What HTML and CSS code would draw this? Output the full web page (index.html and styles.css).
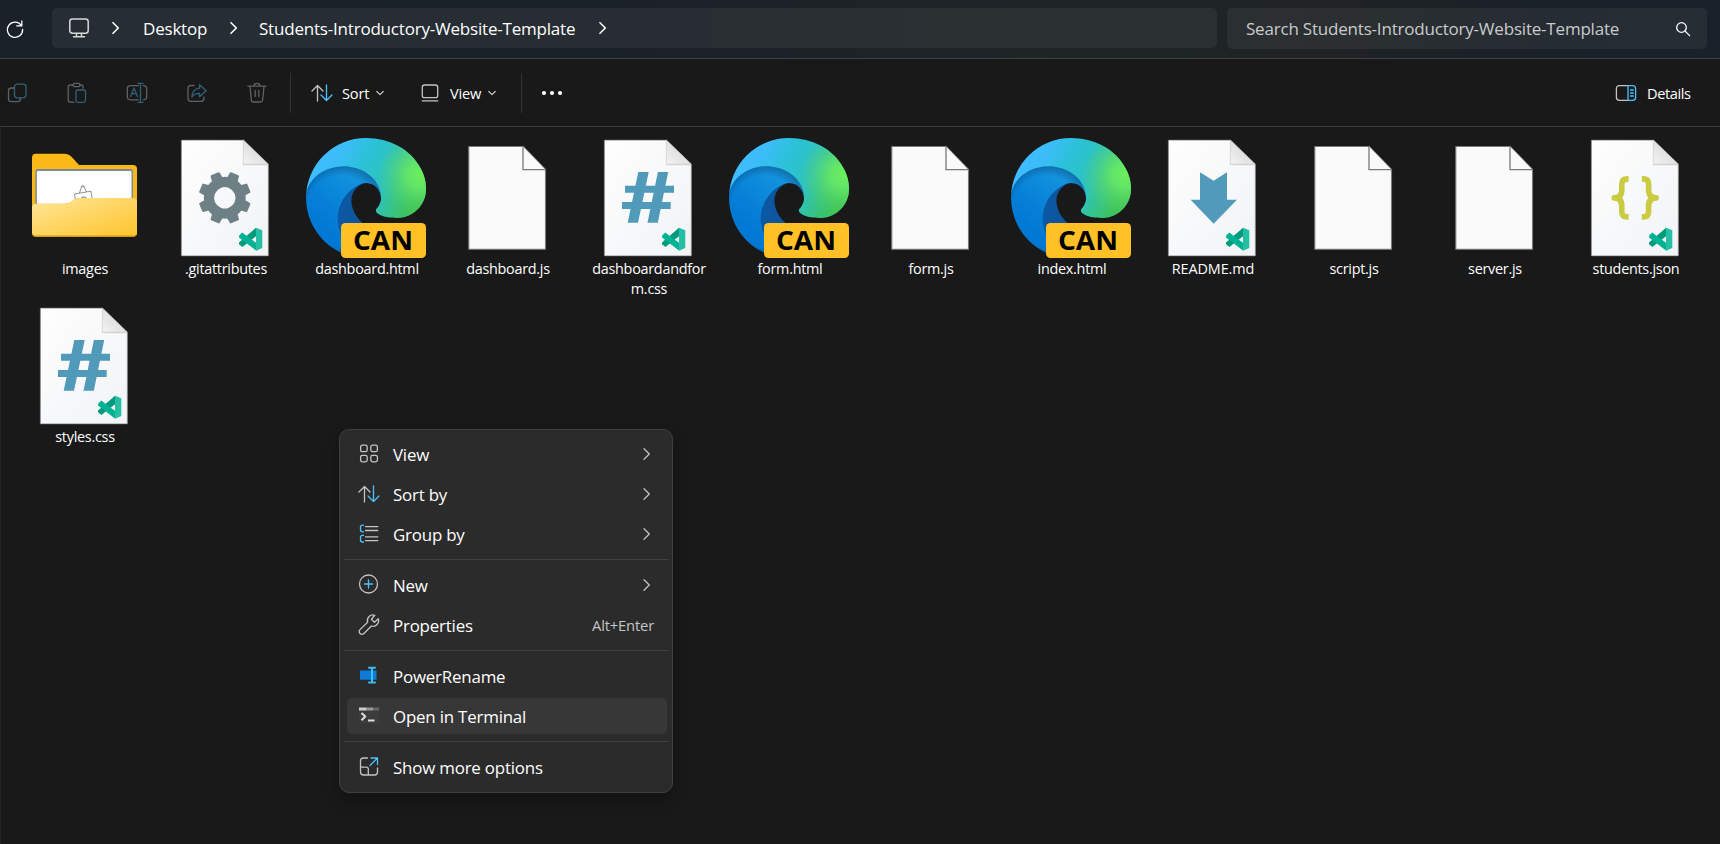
FILE: index.html
```html
<!DOCTYPE html>
<html lang="en">
<head>
<meta charset="utf-8">
<title>Students-Introductory-Website-Template</title>
<link rel="stylesheet" href="styles.css">
</head>
<body>
<svg class="defs" width="0" height="0" aria-hidden="true">
  <defs>
    <linearGradient id="paperFill" x1="0" y1="0" x2="1" y2="1"><stop offset="0" stop-color="#fefefe"/><stop offset="1" stop-color="#f1f3f5"/></linearGradient>
    <linearGradient id="foldFill" x1="0" y1="1" x2="1" y2="0"><stop offset="0" stop-color="#f3f3f3"/><stop offset="1" stop-color="#cfcfd1"/></linearGradient>
    <linearGradient id="folderFront" x1="0" y1="0" x2="1" y2="1"><stop offset="0" stop-color="#ffe699"/><stop offset="1" stop-color="#fec52d"/></linearGradient>
    <linearGradient id="edgeDark" gradientUnits="userSpaceOnUse" x1="63" y1="177" x2="242" y2="177"><stop offset="0" stop-color="#0c59a4"/><stop offset="1" stop-color="#114a8b"/></linearGradient>
    <linearGradient id="edgeBlue" gradientUnits="userSpaceOnUse" x1="153" y1="75" x2="46" y2="214"><stop offset="0" stop-color="#1b9de2"/><stop offset=".16" stop-color="#1595df"/><stop offset=".67" stop-color="#0680d7"/><stop offset="1" stop-color="#0078d4"/></linearGradient>
    <radialGradient id="edgeShade" gradientUnits="userSpaceOnUse" cx="75" cy="156" r="101"><stop offset=".74" stop-color="#062a50" stop-opacity="0"/><stop offset="1" stop-color="#062a50" stop-opacity=".42"/></radialGradient>
    <linearGradient id="edgeTop" gradientUnits="userSpaceOnUse" x1="20" y1="60" x2="215" y2="165"><stop offset="0" stop-color="#3fbcff"/><stop offset=".16" stop-color="#3bbdf8"/><stop offset=".4" stop-color="#2ac2d6"/><stop offset=".68" stop-color="#2fc3bb"/><stop offset="1" stop-color="#3cc35a"/></linearGradient>
    <radialGradient id="edgeGreen" gradientUnits="userSpaceOnUse" cx="244" cy="78" r="92"><stop offset="0" stop-color="#6cf05c"/><stop offset=".3" stop-color="#66e867" stop-opacity=".9"/><stop offset="1" stop-color="#56d060" stop-opacity="0"/></radialGradient>

    <symbol id="paper" viewBox="0 0 120 120">
      <path d="M16.8 2.3H78.5L103.2 26.5V117.7H16.8Z" fill="url(#paperFill)" stroke="#c4c4c4" stroke-width=".7"/>
      <path d="M78.3 2.3V27.3H103.2Z" fill="#bbb" opacity=".6"/>
      <path d="M78.3 2.3V26.2H103.2Z" fill="url(#foldFill)" stroke="#c6c6c6" stroke-width=".5"/>
    </symbol>
    <symbol id="vscode" viewBox="0 0 120 120">
      <path d="M91 89.7V98.2L77.4 109.1L74 106.3V104.6Z" fill="#009a7c"/>
      <path d="M74.2 97.5L77.2 94.5L91.3 105V112.7L74 99.5Z" fill="#00b294"/>
      <path d="M91 89.7L97.3 92.3V110.1L91 112.7Z" fill="#24bfa5"/>
    </symbol>
    <symbol id="file-gear" viewBox="0 0 120 120">
      <use href="#paper"/>
      <g fill="#6d8086" transform="translate(59.8 59.8) rotate(22.5)">
        <path id="tooth" d="M-6 -17L-4.9 -25.2Q-4.8 -26 -3.9 -26H3.9Q4.8 -26 4.9 -25.2L6 -17Z"/>
        <use href="#tooth" transform="rotate(45)"/><use href="#tooth" transform="rotate(90)"/><use href="#tooth" transform="rotate(135)"/><use href="#tooth" transform="rotate(180)"/><use href="#tooth" transform="rotate(225)"/><use href="#tooth" transform="rotate(270)"/><use href="#tooth" transform="rotate(315)"/>
        <circle r="15.8" fill="none" stroke="#6d8086" stroke-width="10.2"/>
      </g>
      <use href="#vscode"/>
    </symbol>
    <symbol id="file-hash" viewBox="0 0 120 120">
      <use href="#paper"/>
      <g fill="#519aba"><path d="M37 47.7H86V54.8H37ZM34 64H82.7V71.1H34Z"/><path d="M50.3 34H60.7L50 84.7H39.7ZM69.9 34H80.2L69.8 84.7H59.5Z"/></g>
      <use href="#vscode"/>
    </symbol>
    <symbol id="file-arrow" viewBox="0 0 120 120">
      <use href="#paper"/>
      <path d="M48 34.3L61.6 42.8L75 34.3V61.7H85L61.6 85.7L38.6 61.7H48Z" fill="#519aba"/>
      <use href="#vscode"/>
    </symbol>
    <symbol id="file-braces" viewBox="0 0 120 120">
      <use href="#paper"/>
      <g class="braces">
        <path d="M53.6 40.9H52.3Q46.8 40.9 46.8 46V51.5Q46.8 59.9 39.3 59.9Q46.8 59.9 46.8 68.3V73.7Q46.8 78.9 52.3 78.9H53.6"/>
        <path d="M66.8 40.9H68.1Q73.6 40.9 73.6 46V51.5Q73.6 59.9 81.1 59.9Q73.6 59.9 73.6 68.3V73.7Q73.6 78.9 68.1 78.9H66.8"/>
      </g>
      <use href="#vscode"/>
    </symbol>
    <symbol id="file-plain" viewBox="0 0 120 120">
      <path d="M21.8 8.5H76L98.5 31.5V111.2H21.8Z" fill="#fafafa" stroke="#7c7a78" stroke-width="1.1"/>
      <path d="M76 8.5V31.7H98.5" fill="#fafafa" stroke="#7c7a78" stroke-width="1.3"/>
    </symbol>
    <symbol id="folder" viewBox="0 0 120 120">
      <path d="M8 19.7Q8 15.7 12 15.7H40Q44.5 15.7 47.5 18.7L55 27H109Q113 27 113 31V94.7Q113 98.7 109 98.7H12Q8 98.7 8 94.7Z" fill="#fbb917"/>
      <path d="M11.3 80V33.5Q11.3 31 13.8 31H106.5Q109 31 109 33.5V80Z" fill="#7d8b95"/>
      <path d="M12.9 80V34Q12.9 33 13.9 33H106.5Q107.5 33 107.5 34V80Z" fill="#fff"/>
      <path d="M51.5 63L50.5 56L67 53.2L68.5 63M55.5 55L57.5 49L59.5 48.5L62.5 53.7M57 48.5Q58 46 60.5 48.2M56 61.5Q58.5 56 63.5 61M58 60H62" fill="none" stroke="#777" stroke-width=".8"/>
      <path d="M8 69.7Q8 65.7 12 65.7H40Q44.5 65.7 48 63.4L51 61.3Q53 60 56 60H109Q113 60 113 64V94.7Q113 98.7 109 98.7H12Q8 98.7 8 94.7Z" fill="#d79a12"/>
      <path d="M8 69.7Q8 65.7 12 65.7H40Q44.5 65.7 48 63.4L51 61.3Q53 60 56 60H109Q113 60 113 64V93.7Q113 97.5 109 97.5H12Q8 97.5 8 93.7Z" fill="url(#folderFront)"/>
    </symbol>
    <symbol id="edge" viewBox="0 0 120 120">
      <g transform="scale(.46875)">
        <path fill="url(#edgeDark)" d="M235.68 195.46a93.73 93.73 0 01-10.54 4.71 101.87 101.87 0 01-35.9 6.46c-47.32 0-92.5-32.55-92.5-74.32a38 38 0 0131.3-36.3c-50 2-64.71 52-64.71 81.52 0 73.88 68.09 81.37 82.76 81.37 7.91 0 19.84-2.3 27-4.56l1.31-.44a128.34 128.34 0 0066.6-52.8 4 4 0 00-5.32-5.64z"/>
        <path fill="url(#edgeBlue)" d="M105.73 241.42a79.2 79.2 0 01-22.74-21.34 80.72 80.72 0 0129.53-120c3.12-1.47 8.45-4.13 15.54-4a32.35 32.35 0 0125.69 13 31.88 31.88 0 016.36 18.66c0-.21 24.46-79.6-80-79.6-43.9 0-80 41.66-80 78.21a130.15 130.15 0 0012.11 56 128 128 0 00156.38 67.11 75.55 75.55 0 01-62.78-8z"/>
        <path fill="url(#edgeShade)" d="M105.73 241.42a79.2 79.2 0 01-22.74-21.34 80.72 80.72 0 0129.53-120c3.12-1.47 8.45-4.13 15.54-4a32.35 32.35 0 0125.69 13 31.88 31.88 0 016.36 18.66c0-.21 24.46-79.6-80-79.6-43.9 0-80 41.66-80 78.21a130.15 130.15 0 0012.11 56 128 128 0 00156.38 67.11 75.55 75.55 0 01-62.78-8z"/>
        <path fill="url(#edgeTop)" d="M152.34 148.86c-.81 1.05-3.3 2.5-3.3 5.66 0 2.61 1.7 5.12 4.72 7.23 14.38 10 41.49 8.68 41.56 8.68a59.56 59.56 0 0030.27-8.35 61.38 61.38 0 0030.43-52.88c.26-22.41-8-37.31-11.34-43.91-21.19-41.43-66.92-65.25-116.65-65.25a128 128 0 00-128 126.2c.48-36.54 36.8-66.05 80-66.05 3.5 0 23.46.34 42 10.07 16.34 8.58 24.9 18.94 30.85 29.21 6.18 10.67 7.28 24.15 7.28 29.52 0 5.37-2.74 13.33-7.8 19.91z"/>
        <path fill="url(#edgeGreen)" d="M152.34 148.86c-.81 1.05-3.3 2.5-3.3 5.66 0 2.61 1.7 5.12 4.72 7.23 14.38 10 41.49 8.68 41.56 8.68a59.56 59.56 0 0030.27-8.35 61.38 61.38 0 0030.43-52.88c.26-22.41-8-37.31-11.34-43.91-21.19-41.43-66.92-65.25-116.65-65.25a128 128 0 00-128 126.2c.48-36.54 36.8-66.05 80-66.05 3.5 0 23.46.34 42 10.07 16.34 8.58 24.9 18.94 30.85 29.21 6.18 10.67 7.28 24.15 7.28 29.52 0 5.37-2.74 13.33-7.8 19.91z"/>
      </g>
      <rect x="35" y="85" width="85" height="35" rx="4.5" fill="#ffc125"/>
      <text class="badge" x="47" y="112" textLength="60" lengthAdjust="spacingAndGlyphs">CAN</text>
    </symbol>
    <symbol id="chev" viewBox="0 0 10 14"><path d="M2 1.7L7.3 7L2 12.3"/></symbol>
    <symbol id="down" viewBox="0 0 10 10"><path d="M1.8 3.5L5 6.7L8.2 3.5"/></symbol>
    <symbol id="sort" viewBox="0 0 24 24"><path d="M7.5 20V4.5M2 10L7.5 4.5L13 10"/><path class="accent" d="M16.5 4V19.5M11 14L16.5 19.5L22 14"/></symbol>
  </defs>
</svg>

<header class="nav">
  <svg class="ico refresh" viewBox="0 0 24 24"><path d="M18.4 8.7A7.6 7.6 0 1 0 19.6 12.5M18.8 3.9V8.9H13.8"/></svg>
  <div class="address">
    <svg class="ico monitor" viewBox="0 0 24 24"><rect x="2.8" y="3" width="18.4" height="14.2" rx="2.6"/><path d="M9.5 17.5V20.5M14.5 17.5V20.5M6.5 20.8H17.5"/></svg>
    <svg class="chev"><use href="#chev"/></svg>
    <span class="crumb crumb-desktop">Desktop</span>
    <svg class="chev"><use href="#chev"/></svg>
    <span class="crumb crumb-folder">Students-Introductory-Website-Template</span>
    <svg class="chev"><use href="#chev"/></svg>
  </div>
  <div class="search">
    <span class="placeholder">Search Students-Introductory-Website-Template</span>
    <svg class="magnifier" viewBox="0 0 16 16"><circle cx="6.5" cy="6.5" r="4.8"/><path d="M10 10L14.6 14.6"/></svg>
  </div>
</header>

<div class="toolbar">
  <div class="actions">
    <svg class="ico" viewBox="0 0 24 24"><rect class="accent" x="9.5" y="3.2" width="11.5" height="13.6" rx="2.8"/><path d="M9.5 7H6.3Q3.5 7 3.5 9.8V17.5Q3.5 20.7 6.7 20.7H12.5Q15.5 20.7 15.5 17.5"/></svg>
    <svg class="ico" viewBox="0 0 24 24"><path d="M8 4H5.3Q3.2 4 3.2 6.1V19Q3.2 21.1 5.3 21.1H9M15 4H16.2Q18 4 18 6.1V7"/><rect x="8" y="2.4" width="7" height="3.2" rx="1.6"/><rect class="accent" x="11" y="9" width="9.5" height="12.3" rx="1.8"/></svg>
    <svg class="ico" viewBox="0 0 24 24"><path d="M13.5 4.7H5.5Q2.3 4.7 2.3 7.9V15.6Q2.3 18.8 5.5 18.8H13.5M18.3 4.7Q21.7 4.7 21.7 7.9V15.6Q21.7 18.8 18.3 18.8"/><path class="accent" d="M13 2.3H18M13 21.3H18M15.5 2.3V21.3M5.5 15.5L9 7L12.5 15.5M6.8 12.6H11.2"/></svg>
    <svg class="ico" viewBox="0 0 24 24"><path d="M9 4.5H6Q3 4.5 3 7.5V17.3Q3 20.3 6 20.3H16Q19 20.3 19 17.3V16"/><path class="accent" d="M14.5 3.7L21.2 9.7L14.5 15.7V12.4Q9.5 12.2 6.8 16Q7.5 8 14.5 7.2Z"/></svg>
    <svg class="ico" viewBox="0 0 24 24"><path d="M2.8 5.2H21.2M9 5Q9 2.3 12 2.3Q15 2.3 15 5M5 5.5L6.3 19Q6.5 21 8.5 21H15.5Q17.5 21 17.7 19L19 5.5M10.2 9.5V15.5M13.8 9.5V15.5"/></svg>
  </div>
  <i class="vsep"></i>
  <div class="tool tool-sort"><svg class="ico"><use href="#sort"/></svg><span class="tool-label">Sort</span><svg class="down"><use href="#down"/></svg></div>
  <div class="tool tool-view"><svg class="ico" viewBox="0 0 24 24"><rect x="4.3" y="4" width="15.4" height="12.6" rx="2.2"/><path d="M4.2 19.8H19.8"/></svg><span class="tool-label">View</span><svg class="down"><use href="#down"/></svg></div>
  <i class="vsep"></i>
  <svg class="dots" viewBox="0 0 22 6"><circle cx="3" cy="3" r="2.1"/><circle cx="11" cy="3" r="2.1"/><circle cx="19" cy="3" r="2.1"/></svg>
  <div class="details"><svg class="ico" viewBox="0 0 24 24"><path d="M14 4.6H5.5Q2.4 4.6 2.4 7.7V16.3Q2.4 19.4 5.5 19.4H14"/><path class="accent" d="M14 4.6H18.5Q21.6 4.6 21.6 7.7V16.3Q21.6 19.4 18.5 19.4H14ZM16.5 9H19.3M16.5 12H19.3M16.5 15H19.3"/></svg><span class="details-label">Details</span></div>
</div>

<main class="files">
  <div class="file"><svg class="thumb"><use href="#folder"/></svg><span class="name">images</span></div>
  <div class="file"><svg class="thumb"><use href="#file-gear"/></svg><span class="name">.gitattributes</span></div>
  <div class="file"><svg class="thumb"><use href="#edge"/></svg><span class="name">dashboard.html</span></div>
  <div class="file"><svg class="thumb"><use href="#file-plain"/></svg><span class="name">dashboard.js</span></div>
  <div class="file"><svg class="thumb"><use href="#file-hash"/></svg><span class="name">dashboardandfor<br>m.css</span></div>
  <div class="file"><svg class="thumb"><use href="#edge"/></svg><span class="name">form.html</span></div>
  <div class="file"><svg class="thumb"><use href="#file-plain"/></svg><span class="name">form.js</span></div>
  <div class="file"><svg class="thumb"><use href="#edge"/></svg><span class="name">index.html</span></div>
  <div class="file"><svg class="thumb"><use href="#file-arrow"/></svg><span class="name caps">README.md</span></div>
  <div class="file"><svg class="thumb"><use href="#file-plain"/></svg><span class="name">script.js</span></div>
  <div class="file"><svg class="thumb"><use href="#file-plain"/></svg><span class="name">server.js</span></div>
  <div class="file"><svg class="thumb"><use href="#file-braces"/></svg><span class="name">students.json</span></div>
  <div class="file"><svg class="thumb"><use href="#file-hash"/></svg><span class="name">styles.css</span></div>
</main>

<nav class="menu">
  <div class="item"><svg class="ico" viewBox="0 0 24 24"><rect x="3.6" y="3.1" width="6.6" height="6.6" rx="1.8"/><rect x="13.8" y="3.1" width="6.6" height="6.6" rx="1.8"/><rect x="3.6" y="13.3" width="6.6" height="6.6" rx="1.8"/><rect x="13.8" y="13.3" width="6.6" height="6.6" rx="1.8"/></svg><span class="label">View</span><svg class="chev"><use href="#chev"/></svg></div>
  <div class="item"><svg class="ico"><use href="#sort"/></svg><span class="label">Sort by</span><svg class="chev"><use href="#chev"/></svg></div>
  <div class="item"><svg class="ico" viewBox="0 0 24 24"><path class="accent" d="M6.5 3.2H5.5Q3.5 3.2 3.5 5.2V7.8Q3.5 9.8 5.5 9.8H6.5M6.5 13.4H5.5Q3.5 13.4 3.5 15.4V18Q3.5 20 5.5 20H6.5"/><path d="M8.5 4.7H20.8M8.5 8.5H20.8M8.5 14.8H20.8M8.5 18.6H20.8"/></svg><span class="label">Group by</span><svg class="chev"><use href="#chev"/></svg></div>
  <hr>
  <div class="item"><svg class="ico" viewBox="0 0 24 24"><circle cx="11.5" cy="11" r="9"/><path class="accent" d="M11.5 7V15M7.5 11H15.5"/></svg><span class="label">New</span><svg class="chev"><use href="#chev"/></svg></div>
  <div class="item"><svg class="ico" viewBox="0 0 24 24"><path d="M17.8 2.3A5.6 5.6 0 0 0 10.6 9.2L3 16.6A2.7 2.7 0 0 0 6.9 20.5L14.4 13A5.6 5.6 0 0 0 21.3 5.8L17.5 9.3L14.4 6.2Z"/></svg><span class="label">Properties</span><span class="shortcut">Alt+Enter</span></div>
  <hr>
  <div class="item"><svg class="ico" viewBox="0 0 24 24"><rect x="3" y="6.5" width="16.5" height="9.2" rx=".8" fill="#0f7bd6" stroke="none"/><path d="M12 3.8H18M12 18.4H18M15 3.8V18.4" stroke="#35c1f1" stroke-width="2"/></svg><span class="label">PowerRename</span></div>
  <div class="item hover"><svg class="ico terminal" viewBox="0 0 24 24"><rect x="2" y="3.5" width="20" height="16" fill="#3c3c3c" stroke="none"/><path d="M2 5H9" stroke="#ccc" stroke-width="3"/><path d="M9 5H16" stroke="#999" stroke-width="3"/><path d="M16 5H22" stroke="#666" stroke-width="3"/><path d="M4.5 9L8.3 12.6L4.5 16.2M11 16.5H17.5" stroke="#ddd" stroke-width="2"/></svg><span class="label">Open in Terminal</span></div>
  <hr>
  <div class="item"><svg class="ico" viewBox="0 0 24 24"><path d="M10.5 3H6.5Q3.5 3 3.5 6V17Q3.5 20 6.5 20H17.5Q20.5 20 20.5 17V13M3.5 12.2H9.3Q11.3 12.2 11.3 14.2V20"/><path class="accent" d="M14 3H20.5V9.5M20.5 3L13 10.5"/></svg><span class="label">Show more options</span></div>
</nav>
</body>
</html>
```
FILE: styles.css
```css
* { box-sizing: border-box; }

body {
  position: relative;
  display: flex;
  flex-direction: column;
  width: 1720px;
  height: 844px;
  margin: 0;
  overflow: hidden;
  background: #191919;
  color: #fff;
  font-family: "Open Sans", "Noto Sans", sans-serif;
}

svg { flex: none; display: block; fill: none; stroke: #fff; stroke-linecap: round; stroke-linejoin: round; }
.defs { position: absolute; }
.ico { width: 24px; height: 24px; stroke: #c4c4c4; stroke-width: 1.3; }
.accent { stroke: #4cc2ff; }
.chev { width: 10px; height: 14px; stroke-width: 1.5; }
.down { width: 10px; height: 10px; stroke: #c8c8c8; stroke-width: 1.2; }

/* Navigation row */
.nav {
  display: flex;
  align-items: flex-start;
  height: 59px;
  padding: 8px 13px 0 3px;
  border-bottom: 1px solid #3e4042;
  background: linear-gradient(90deg, #1a2129 0, #1b2128 35%, #1f2427 60%, #1f2326 78%, #1a2028 90%, #1a212a 100%);
  font-size: 17px;
  letter-spacing: -.2px;
  white-space: nowrap;
}
.refresh { margin-top: 9px; stroke: #fff; }
.address {
  display: flex;
  align-items: center;
  width: 1165px;
  height: 40px;
  margin-left: 25px;
  padding-left: 15px;
  border-radius: 5px;
  background: rgba(255, 255, 255, .055);
}
.address .chev { stroke-width: 1.6; }
.monitor { margin: -1px 20px 0 0; stroke: #d8d8d8; stroke-width: 1.5; }
.crumb { height: 24px; line-height: 25px; }
.crumb-desktop { width: 86px; margin-left: 22px; }
.crumb-folder { width: 339px; margin-left: 20px; }
.search {
  display: flex;
  align-items: center;
  justify-content: space-between;
  width: 480px;
  height: 41px;
  margin-left: 10px;
  padding: 0 16px 0 19px;
  border-radius: 5px;
  background: rgba(255, 255, 255, .055);
  color: #c9cbcd;
}
.magnifier { width: 16px; height: 16px; stroke-width: 1.3; }

/* Command bar */
.toolbar {
  display: flex;
  align-items: center;
  height: 68px;
  padding: 1px 29px 0 5px;
  border-bottom: 1px solid #3a3a3a;
  font-size: 14.6px;
  letter-spacing: -.2px;
}
.actions { display: flex; gap: 36px; opacity: .42; }
.vsep { width: 1px; height: 40px; margin-left: 21px; background: #333; }
.tool { display: flex; align-items: center; }
.tool-sort { width: 97px; margin-left: 19px; }
.tool-view { width: 82px; margin-left: 11px; }
.tool-label { margin-left: 8px; }
.tool .down { margin-left: 6px; }
.dots { width: 22px; height: 6px; margin-left: 19px; fill: #fff; stroke: none; }
.details { display: flex; align-items: center; gap: 9px; width: 77px; margin-left: auto; }
.details-label { letter-spacing: -.4px; }

/* File grid */
.files {
  flex: 1;
  display: grid;
  grid-template-columns: repeat(12, 141px);
  grid-auto-rows: 168px;
  margin-right: -2px;
  padding: 11px 14px 0 13px;
  border-left: 1px solid #262626;
}
.file { display: flex; flex-direction: column; align-items: center; font-size: 14.4px; letter-spacing: -.27px; line-height: 20px; text-align: center; }
.thumb { width: 120px; height: 120px; margin: 0 1px 1px 0; stroke: none; }
.name { margin-left: 1px; }
.caps { letter-spacing: -.1px; }
.badge { font: 700 27px "Open Sans", sans-serif; letter-spacing: 0; fill: #000; stroke: none; }
.braces { fill: none; stroke: #cbcb41; stroke-width: 5.6; stroke-linecap: butt; }

/* Context menu */
.menu {
  position: absolute;
  left: 339px;
  top: 429px;
  display: flex;
  flex-direction: column;
  width: 334px;
  height: 364px;
  padding: 4px;
  border: 1px solid #404040;
  border-radius: 10px;
  background: #2b2b2b;
  box-shadow: 0 8px 18px rgba(0, 0, 0, .3);
  font-size: 16.9px;
  letter-spacing: -.2px;
}
.item { display: flex; align-items: center; height: 36px; margin: 2px 1px 2px 3px; padding: 0 15px 0 10px; border-radius: 5px; }
.label { margin-left: 12px; }
.item .chev { margin-left: auto; stroke: #c0c0c0; stroke-width: 1.3; }
.shortcut { margin: 0 -2px 0 auto; font-size: 14.8px; color: #c4c4c4; }
.hover { background: #373737; }
.terminal { stroke-linecap: butt; }
.menu hr { width: 325px; height: 1px; margin: 5px 0; border: 0; background: #404040; }
```
